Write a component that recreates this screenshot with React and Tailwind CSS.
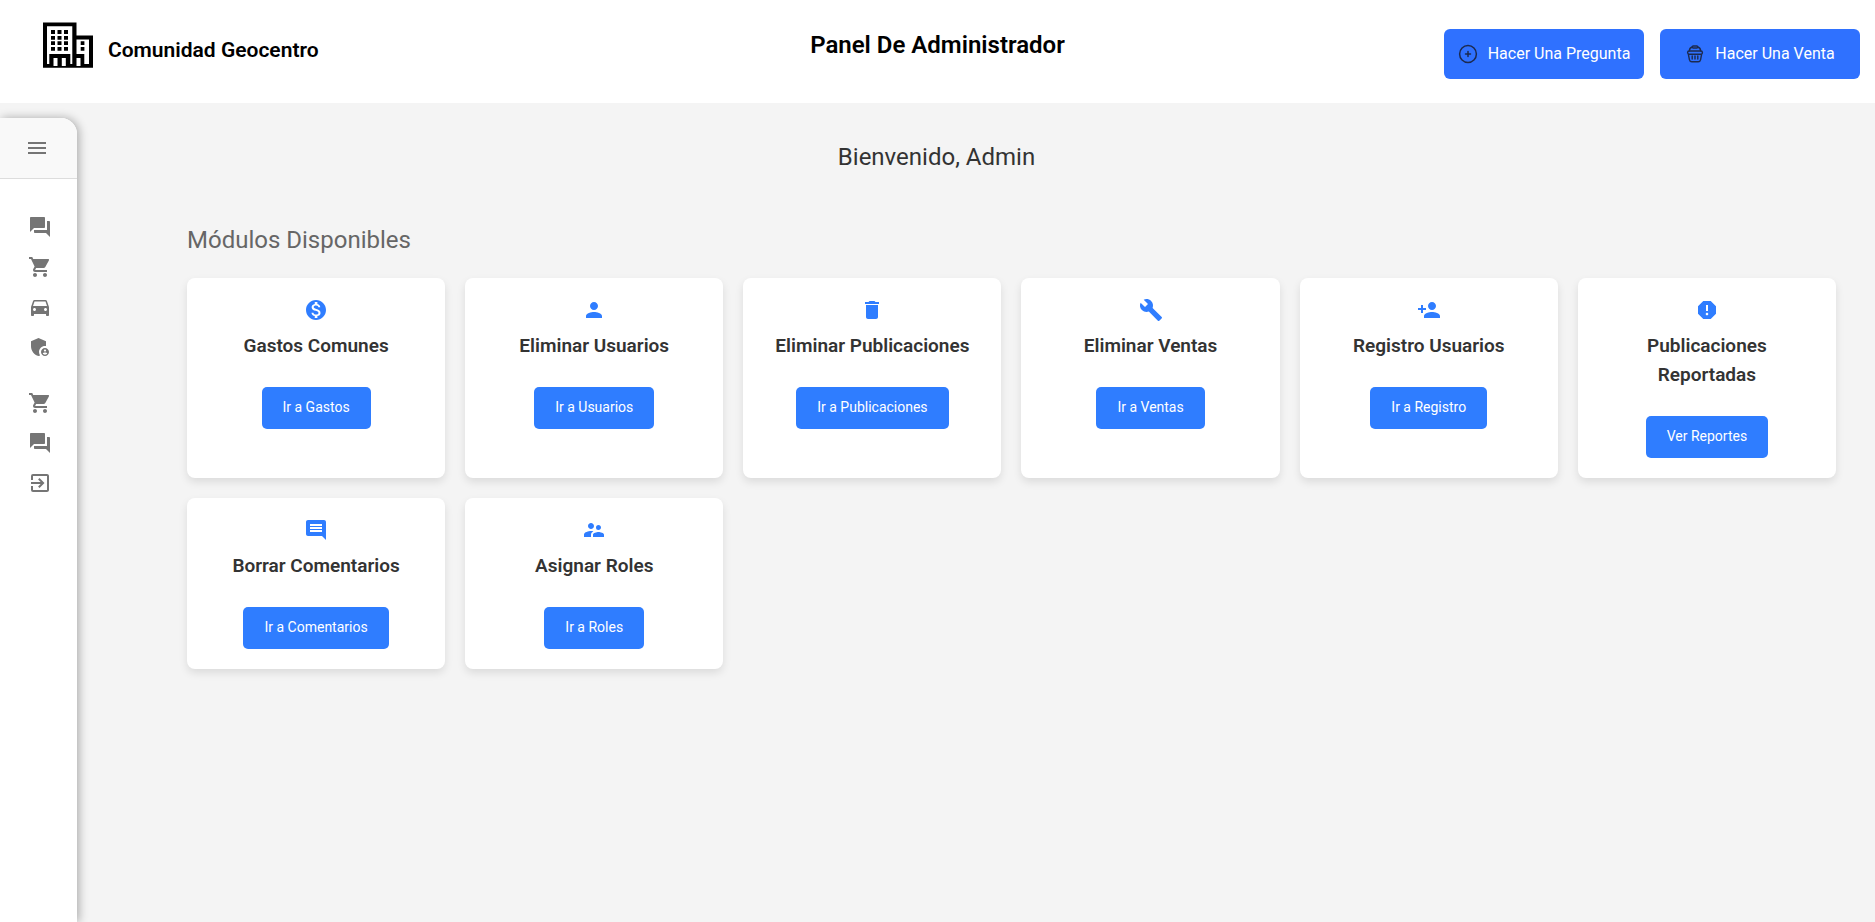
import {
  MdMonetizationOn, MdPerson, MdDelete, MdBuild, MdPersonAdd, MdReport, MdComment,
  MdSupervisorAccount, MdMenu, MdForum, MdShoppingCart, MdDirectionsCar,
  MdAdminPanelSettings, MdExitToApp,
} from "react-icons/md";

const modules = [
  { title: "Gastos Comunes", action: "Ir a Gastos", Icon: MdMonetizationOn },
  { title: "Eliminar Usuarios", action: "Ir a Usuarios", Icon: MdPerson },
  { title: "Eliminar Publicaciones", action: "Ir a Publicaciones", Icon: MdDelete },
  { title: "Eliminar Ventas", action: "Ir a Ventas", Icon: MdBuild },
  { title: "Registro Usuarios", action: "Ir a Registro", Icon: MdPersonAdd },
  { title: "Publicaciones Reportadas", action: "Ver Reportes", Icon: MdReport },
  { title: "Borrar Comentarios", action: "Ir a Comentarios", Icon: MdComment },
  { title: "Asignar Roles", action: "Ir a Roles", Icon: MdSupervisorAccount },
];

const mainLinks = [
  { label: "Foro", Icon: MdForum },
  { label: "Ventas", Icon: MdShoppingCart },
  { label: "Estacionamiento", Icon: MdDirectionsCar },
  { label: "Administración", Icon: MdAdminPanelSettings },
];

const userLinks = [
  { label: "Mis ventas", Icon: MdShoppingCart },
  { label: "Mis preguntas", Icon: MdForum },
  { label: "Salir", Icon: MdExitToApp },
];

function BuildingLogo() {
  return (
    <svg viewBox="0 0 50 46" className="h-[46px] w-[50px]" aria-hidden="true">
      <path fillRule="evenodd" d="M0 0.500H33.500V13.500H50V45.700H0ZM4 4.300V42H6.300V32H27.300V42H29.300V4.300ZM33.500 17.500V32H41.300V42H46V17.500Z" />
      <path d="M8 8h4v4H8zM14.500 8h4v4h-4zM21 8h4v4h-4zM8 14h4v3.700H8zM14.500 14h4v3.700h-4zM21 14h4v3.700h-4zM8 19.300h4v3.700H8zM14.500 19.300h4v3.700h-4zM21 19.300h4v3.700h-4zM8 25h4v3.700H8zM14.500 25h4v3.700h-4zM21 25h4v3.700h-4zM37.700 19.300h3.700v3.700h-3.700zM37.700 25h3.700v3.700h-3.700z" />
      <path fill="#fff" d="M10.500 36h4v8h-4zM18.800 36h4v8h-4zM33.500 36h4v8h-4z" />
    </svg>
  );
}

function CirclePlus() {
  return (
    <svg viewBox="0 0 20 20" className="size-5" fill="none" stroke="#1c2a50" strokeWidth="1.500" strokeLinecap="round" aria-hidden="true">
      <circle cx="10" cy="10" r="8.400" />
      <path d="M10 7.500v5M7.500 10h5" />
    </svg>
  );
}

function Basket() {
  return (
    <svg viewBox="0 0 20 20" className="size-5" fill="none" stroke="#1c2a50" strokeWidth="1.400" strokeLinecap="round" strokeLinejoin="round" aria-hidden="true">
      <path d="M4.300 6.800C4.600 4.300 5.300 3.200 7.500 3M15.700 6.800C15.400 4.300 14.700 3.200 12.500 3" />
      <rect x="7.200" y="2" width="5.600" height="2" rx="1" />
      <path d="M4.200 7H15.800Q17.400 7 17.400 8.600T15.800 10.200M2.600 8.600Q2.600 7 4.200 7M2.600 8.600Q2.600 10.200 4.200 10.200H15.800M3.400 10.400L4.400 15.600Q4.800 17.700 6.800 17.700H13.200Q15.200 17.700 15.600 15.600L16.600 10.400M7.200 12V15M10 12V15M12.800 12V15" />
    </svg>
  );
}

function HeaderButton({ icon, children }) {
  return (
    <button type="button" className="flex h-[50px] w-[200px] items-center justify-center gap-2.5 rounded-md bg-[#2f71ff] text-base text-white">
      {icon}
      <span>{children}</span>
    </button>
  );
}

function NavList({ items }) {
  return (
    <ul className="flex flex-col gap-4">
      {items.map(({ label, Icon }) => (
        <li key={label}>
          <a href="#" aria-label={label} className="block">
            <Icon className="size-6" />
          </a>
        </li>
      ))}
    </ul>
  );
}

function ModuleCard({ title, action, Icon }) {
  return (
    <article className="flex flex-col items-center rounded-lg bg-white p-5 text-center shadow-[0_4px_8px_rgba(0,0,0,0.1)]">
      <Icon className="size-6 text-[#2f7dff]" aria-hidden="true" />
      <h3 className="mt-[9px] text-[19px] leading-[29px] font-semibold text-[#333]">{title}</h3>
      <button type="button" className="mt-[27px] h-[42px] rounded-[5px] bg-[#2f7dff] px-[21px] pb-0.5 text-sm text-white">
        {action}
      </button>
    </article>
  );
}

export default function App() {
  return (
    <div className="flex min-h-screen flex-col bg-[#f4f4f4] font-['Roboto',sans-serif]">
      <header className="grid h-[103px] grid-cols-[1fr_auto_1fr] bg-white text-black">
        <div className="flex items-start gap-[15px] pt-[22px] pl-[43px]">
          <BuildingLogo />
          <span className="pt-3 text-[21px] leading-8 font-semibold">Comunidad Geocentro</span>
        </div>
        <h1 className="pt-[29px] text-center text-2xl leading-8 font-semibold">Panel De Administrador</h1>
        <div className="flex justify-end gap-4 pt-[29px] pr-[15px]">
          <HeaderButton icon={<CirclePlus />}>Hacer Una Pregunta</HeaderButton>
          <HeaderButton icon={<Basket />}>Hacer Una Venta</HeaderButton>
        </div>
      </header>
      <div className="flex flex-1">
        <aside className="mt-[15px] w-[77px] shrink-0 rounded-tr-2xl bg-white text-[#757575] shadow-[2px_0_10px_rgba(0,0,0,0.3)]">
          <div className="flex h-[61px] items-center rounded-tr-2xl border-b border-[#ddd] bg-[#f9f9f9] pl-[25px]">
            <button type="button" aria-label="Abrir menú">
              <MdMenu className="size-6" />
            </button>
          </div>
          <nav className="flex flex-col gap-8 pt-9 pl-7">
            <NavList items={mainLinks} />
            <NavList items={userLinks} />
          </nav>
        </aside>
        <main className="flex-1 pr-[39px] pl-[110px]">
          <p className="mt-[38px] mr-[150px] text-center text-2xl leading-8 text-[#333]">Bienvenido, Admin</p>
          <h2 className="mt-[51px] text-2xl leading-8 text-[#666]">Módulos Disponibles</h2>
          <div className="mt-[22px] grid grid-cols-[repeat(auto-fit,minmax(250px,1fr))] gap-5">
            {modules.map((module) => (
              <ModuleCard key={module.title} {...module} />
            ))}
          </div>
        </main>
      </div>
    </div>
  );
}
